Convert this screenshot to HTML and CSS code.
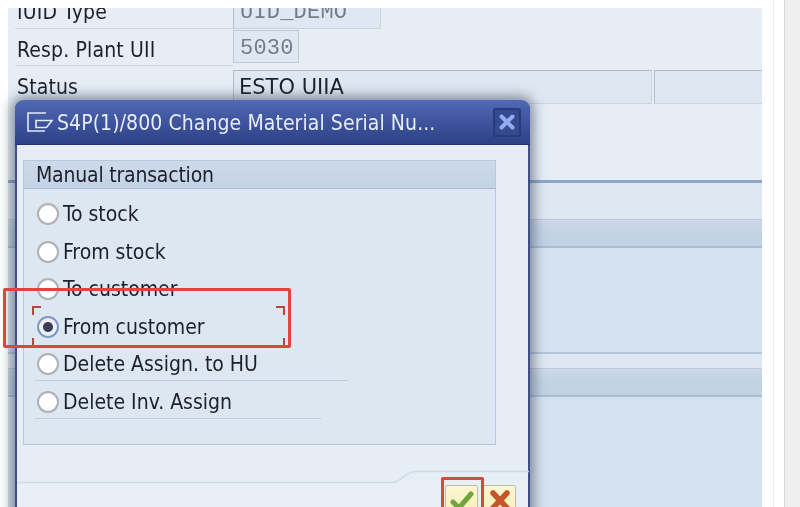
FILE: index.html
```html
<!DOCTYPE html>
<html lang="en">
<head>
<meta charset="utf-8">
<title>Change Material Serial Number</title>
<link rel="stylesheet" href="styles.css">
</head>
<body>
<div class="screen">
  <main class="panel">
    <section class="form">
      <div class="row">
        <div class="label">IUID Type</div>
        <div class="field field-mono field-type">UID_DEMO</div>
      </div>
      <div class="row">
        <div class="label">Resp. Plant UII</div>
        <div class="field field-mono field-plant">5030</div>
      </div>
      <div class="row">
        <div class="label">Status</div>
        <div class="field field-status">ESTO UIIA</div>
        <div class="field field-extra"></div>
      </div>
    </section>
    <div class="tabline"></div>
    <div class="gap gap-a"></div>
    <div class="band"></div>
    <div class="content content-a"></div>
    <div class="gap gap-b"></div>
    <div class="band"></div>
    <div class="content content-b"></div>
  </main>
  <div class="scroll-track"></div>
  <div class="scroll-side"></div>

  <div class="dialog">
    <header class="titlebar">
      <svg class="title-icon" width="27" height="20" viewBox="0 0 27 20" fill="none" stroke="#e3e9f6" stroke-width="1.6">
        <path d="M19 1H1V19H18"/>
        <path d="M9 8.5H25L19.5 15.5H9Z"/>
      </svg>
      <span class="title-text">S4P(1)/800 Change Material Serial Nu...</span>
      <button class="close" type="button" aria-label="Close">
        <svg width="16" height="16" viewBox="0 0 16 16" stroke="#93abf3" stroke-width="4" stroke-linecap="round"><path d="M2.5 2.5L13.5 13.5M13.5 2.5L2.5 13.5"/></svg>
      </button>
    </header>
    <div class="dialog-body">
      <section class="group">
        <h2 class="group-head">Manual transaction</h2>
        <div class="group-body">
          <div class="opt"><span class="radio"></span><span>To stock</span></div>
          <div class="opt"><span class="radio"></span><span>From stock</span></div>
          <div class="opt"><span class="radio"></span><span>To customer</span></div>
          <div class="opt opt-focus">
            <span class="radio radio-on"></span><span>From customer</span>
            <i class="corner tl"></i><i class="corner tr"></i><i class="corner bl"></i><i class="corner br"></i>
          </div>
          <div class="opt opt-line line-a"><span class="radio"></span><span>Delete Assign. to HU</span></div>
          <div class="opt opt-line line-b"><span class="radio"></span><span>Delete Inv. Assign</span></div>
        </div>
      </section>
    </div>
    <footer class="footer">
      <svg class="footer-line" width="512" height="14" viewBox="0 0 512 14" fill="none" stroke="#d0d9e5" stroke-width="1.5"><path d="M0 12.5H375C384 12.5 388 1.5 399 1.5H512"/></svg>
      <div class="buttons">
        <button class="btn" type="button" aria-label="OK">
          <svg width="26" height="22" viewBox="0 0 26 22" fill="none" stroke="#6fa63a" stroke-width="5" stroke-linecap="round" stroke-linejoin="round"><path d="M4 13L10 19L22 5"/></svg>
        </button>
        <button class="btn" type="button" aria-label="Cancel">
          <svg width="24" height="22" viewBox="0 0 24 22" fill="none" stroke="#c4572a" stroke-width="5.5" stroke-linecap="round"><path d="M5 4L19 19M19 4L5 19"/></svg>
        </button>
      </div>
    </footer>
  </div>

  <div class="mark mark-option"></div>
  <div class="mark mark-ok"></div>
</div>
</body>
</html>
```
FILE: styles.css
```css
* { box-sizing: border-box; }
html, body { margin: 0; height: 100%; background: #fff; }
body { overflow: hidden; }
.screen {
  position: relative;
  display: flex;
  width: 800px;
  height: 507px;
  padding: 8px 0 0 8px;
  overflow: hidden;
  background: #fff;
  font-family: "DejaVu Sans", "Noto Sans", sans-serif;
  font-stretch: condensed;
  font-size: 21px;
  color: #1d2029;
  filter: blur(0.45px);
}
.panel {
  display: flex;
  flex-direction: column;
  width: 754px;
  height: 499px;
  overflow: hidden;
  background: #e6edf5;
}
.form { margin-top: -17px; padding-left: 7px; flex: none; }
.row { display: flex; height: 37.5px; }
.label {
  width: 218px;
  line-height: 42px;
  padding-left: 2px;
  letter-spacing: 0.15px;
  border-bottom: 1.5px solid #cfd6df;
}
.field {
  height: 100%;
  padding-left: 5px;
  line-height: 33px;
  background: #dfe8f2;
  border: 1.5px solid #cdd3da;
  border-top-color: #b5b9bd;
  border-left-color: #b9bdc2;
}
.field-mono { font-family: "Liberation Mono", monospace; font-size: 22px; font-stretch: normal; color: #777c83; letter-spacing: 0.2px; line-height: 41px; padding-left: 6px; }
.field-type { width: 148px; }
.field-plant { width: 66px; margin-top: 1px; height: 33px; line-height: 36px; border-color: #c3c8cf; }
.field-status { width: 419px; margin-top: 4px; height: 34px; font-stretch: normal; }
.field-extra { flex: 1; margin: 4px -1px 0 2px; height: 34px; }
.tabline { margin-top: 76px; height: 3px; flex: none; background: #8ea5cb; }
.gap { flex: none; background: #dfe8f2; }
.gap-a { height: 36px; }
.gap-b { height: 14px; }
.band {
  flex: none;
  height: 29px;
  background: linear-gradient(#ced9e8, #c2d2e5 45%);
  border-top: 1px solid #b9c9de;
  border-bottom: 2px solid #a9bcd7;
}
.content { background: #d5e2ef; }
.content-a { height: 106px; flex: none; border-bottom: 2px solid #b4c6dc; }
.content-b { flex: 1; }
.scroll-track { width: 22px; margin-top: -8px; background: #fff; position: relative; }
.scroll-track::before {
  content: "";
  position: absolute;
  left: 11px;
  top: 0;
  bottom: 0;
  width: 1px;
  background: #ececec;
}
.scroll-side {
  flex: 1;
  margin-top: -8px;
  background: #efefef;
  border-left: 1.5px solid #d6d6d6;
}

/* floating dialog window */
.dialog {
  position: absolute;
  left: 15px;
  top: 100px;
  width: 515px;
  height: 420px;
  display: flex;
  flex-direction: column;
  background: #e6edf5;
  border-radius: 9px 9px 0 0;
  border-left: 2px solid #3f4f86;
  border-right: 2px solid #3f4f86;
  box-shadow: 0 0 13px 3px rgba(60, 70, 90, 0.65);
}
.titlebar {
  flex: none;
  display: flex;
  align-items: center;
  height: 45px;
  margin: 0 -2px;
  padding: 0 9px 0 12px;
  border-radius: 9px 9px 0 0;
  background: linear-gradient(#5169b6, #465ca6 30%, #2c4186);
  border-bottom: 1px solid #24346f;
  color: #e6ecf8;
}
.title-icon { flex: none; margin-right: 3px; }
.title-text { flex: 1; padding-top: 2px; letter-spacing: 0.08px; white-space: nowrap; }
.close {
  flex: none;
  display: flex;
  align-items: center;
  justify-content: center;
  width: 28px;
  height: 29px;
  padding: 0;
  border-radius: 2px;
  border: 2px solid #2a3b7c;
  background: #35498f;
}
.dialog-body { flex: none; height: 336px; padding: 15px 32px 0 6px; }
.group {
  height: 285px;
  display: flex;
  flex-direction: column;
  border: 1px solid #b7c8de;
  background: #dde7f2;
}
.group-head {
  flex: none;
  height: 28px;
  margin: 0;
  padding-left: 12px;
  font-size: 21px;
  font-weight: 400;
  line-height: 28px;
  letter-spacing: -0.2px;
  background: linear-gradient(#cddaea, #c2d2e5);
  border-bottom: 1px solid #a9bcd7;
}
.group-body { flex: 1; padding: 6.5px 0 0 13px; }
.opt {
  position: relative;
  display: flex;
  align-items: center;
  gap: 4px;
  height: 37.5px;
}
.radio {
  flex: none;
  width: 22px;
  height: 22px;
  border-radius: 50%;
  border: 2px solid #aeb0b4;
  background: radial-gradient(circle at 50% 60%, #fff 60%, #e8e8ee);
}
.radio-on {
  border-color: #7f98c6;
  background: radial-gradient(circle, #3e3e58 0 4.5px, #eef0f6 5.5px);
}
.opt-line::after {
  content: "";
  position: absolute;
  left: -2px;
  bottom: 2px;
  height: 1px;
  background: #bfccdb;
}
.line-a::after { width: 313px; }
.line-b::after { width: 286px; }
.corner { position: absolute; width: 9px; height: 9px; border: 0 solid #b4483a; }
.tl { left: -5px; top: -2px; border-width: 2px 0 0 2px; }
.tr { left: 239px; top: -2px; border-width: 2px 2px 0 0; }
.bl { left: -5px; top: 30px; border-left-width: 2px; }
.br { left: 239px; top: 30px; border-right-width: 2px; }
.footer { position: relative; flex: 1; background: #e9eff6; display: flex; justify-content: flex-end; }
.footer::before {
  content: "";
  position: absolute;
  left: 0;
  right: 0;
  top: -11px;
  height: 11px;
  background: #e6edf5;
}
.footer-line { position: absolute; left: 0; top: -11px; z-index: 1; }
.buttons { display: flex; gap: 5px; height: 36px; padding: 4px 12px 0 0; position: relative; }
.btn {
  display: flex;
  align-items: flex-start;
  justify-content: center;
  width: 33px;
  height: 36px;
  padding: 3px 0 0;
  border: 1.5px solid #bcbcae;
  border-radius: 2px;
  background: linear-gradient(#fbf5d2, #f9efb8);
}

/* red annotations drawn over the screenshot */
.mark { position: absolute; border: 3px solid #d8483c; border-radius: 2px; }
.mark-option { left: 3px; top: 288px; width: 288px; height: 60px; }
.mark-ok { left: 441px; top: 477px; width: 43px; height: 40px; }
```
